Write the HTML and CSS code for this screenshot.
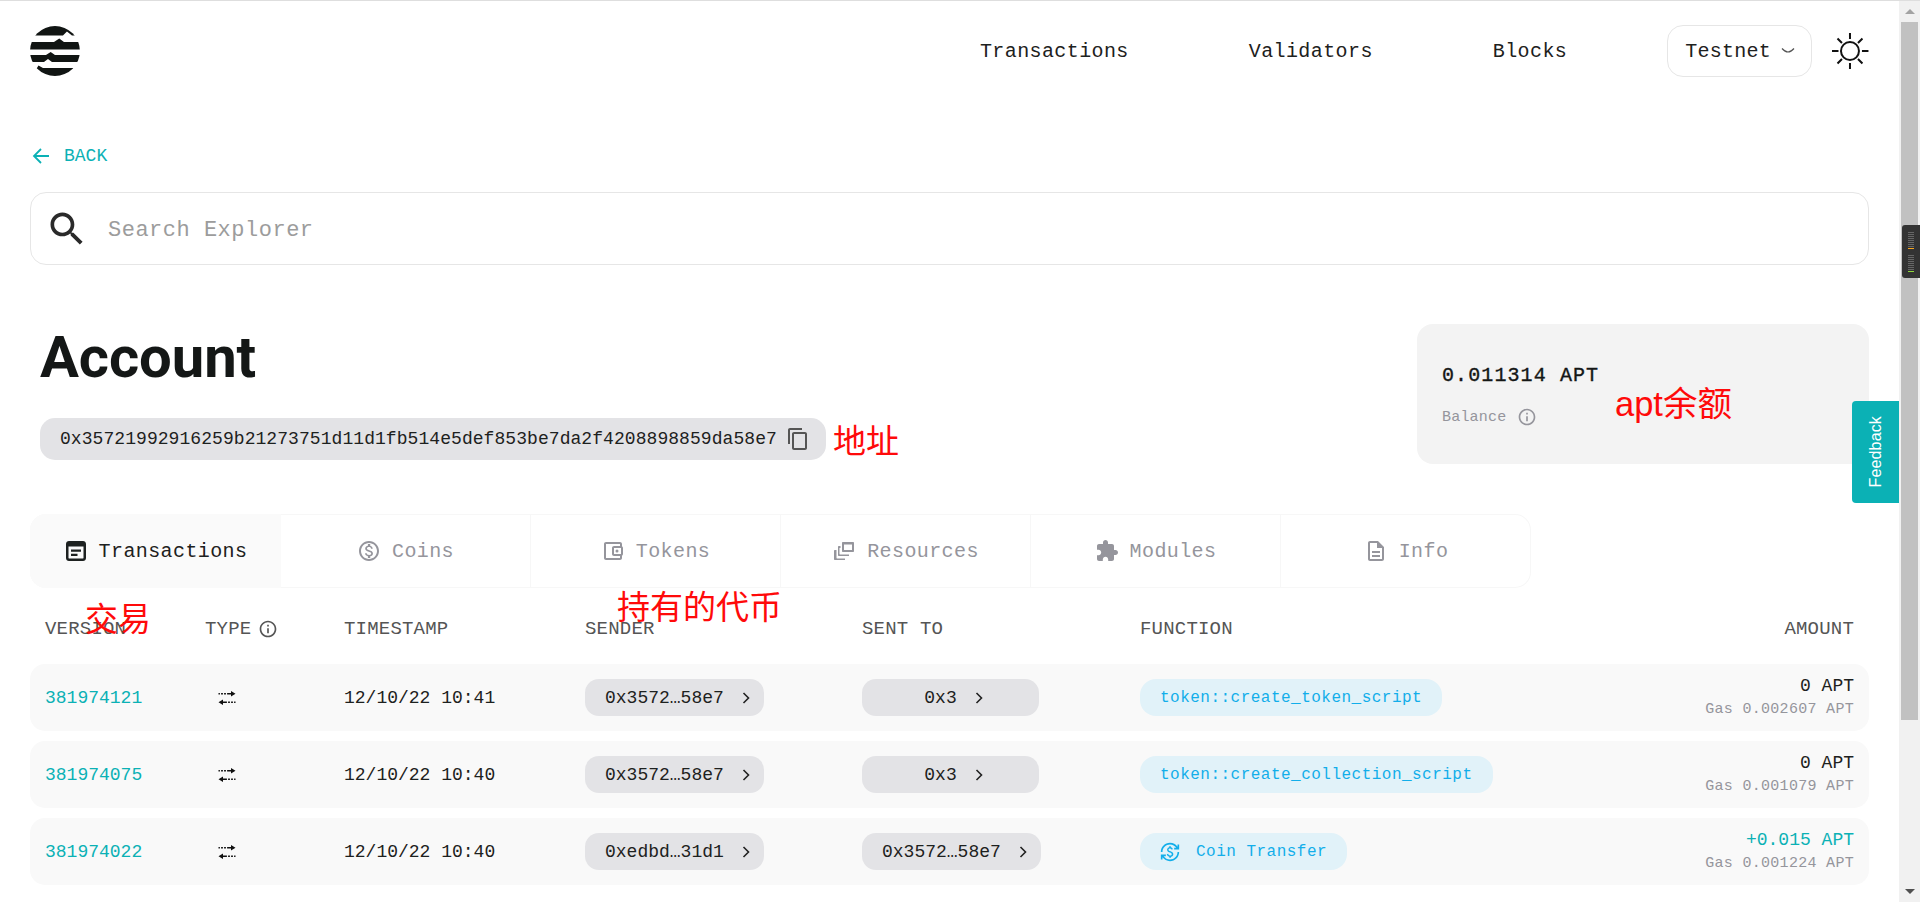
FILE: index.html
```html
<!DOCTYPE html>
<html lang="en">
<head>
<meta charset="utf-8">
<title>Account</title>
<link rel="stylesheet" href="styles.css">
</head>
<body>
<div class="window">
  <main class="page">
    <header class="topbar">
      <svg class="logo" viewBox="0 0 50 50" aria-hidden="true">
        <defs><clipPath id="disc"><circle cx="25" cy="25" r="25"/></clipPath></defs>
        <g clip-path="url(#disc)" fill="#111513">
          <path d="M0 0H50V9.500H42L37 5.500L33 9.500H0Z"/>
          <path d="M0 16H24L29.300 12.500L34 16H50V23.500H0Z"/>
          <path d="M0 29H16L20.700 26L25 29H50V36H22L18 33L14 36H0Z"/>
          <path d="M0 42H7L8.500 39.500L13 42H50V50H0Z"/>
        </g>
      </svg>
      <nav class="nav">
        <a class="nav-link nav-tx">Transactions</a>
        <a class="nav-link nav-val">Validators</a>
        <a class="nav-link nav-blk">Blocks</a>
      </nav>
      <div class="network">
        <span>Testnet</span>
        <svg class="network-caret" viewBox="0 0 14 8"><path d="M1 1.500Q7 8.500 13 1.500"/></svg>
      </div>
      <svg class="sun" viewBox="0 0 38 38" aria-hidden="true">
        <circle cx="19" cy="19" r="9"/>
        <path d="M19 1V7M19 31V37M1 19H7.500M31 19H37.500M6.500 6.500L11 11M27 27L31.500 31.500M6.500 31.500L11 27M27 11L31.500 6.500"/>
      </svg>
    </header>

    <a class="back">
      <svg class="back-arrow" viewBox="0 0 18 18"><path d="M17 9H2M9 2L2 9L9 16"/></svg>
      <span>BACK</span>
    </a>

    <div class="search">
      <svg class="search-icon" viewBox="0 0 24 24"><path d="M15.500 14h-.79l-.28-.27C15.410 12.590 16 11.110 16 9.500 16 5.910 13.090 3 9.500 3S3 5.910 3 9.500 5.910 16 9.500 16c1.610 0 3.090-.59 4.230-1.570l.27.28v.79l5 4.990L20.490 19l-4.990-5zm-6 0C7.010 14 5 11.990 5 9.500S7.010 5 9.500 5 14 7.010 14 9.500 11.990 14 9.500 14z"/></svg>
      <span class="search-text">Search Explorer</span>
    </div>

    <section class="account">
      <div class="account-main">
        <h1 class="title">Account</h1>
        <div class="address">
          <span class="address-text">0x35721992916259b21273751d11d1fb514e5def853be7da2f4208898859da58e7</span>
          <svg class="copy-icon" viewBox="0 0 24 24"><path d="M16 1H4c-1.100 0-2 .9-2 2v14h2V3h12V1zm3 4H8c-1.100 0-2 .9-2 2v14c0 1.100.9 2 2 2h11c1.100 0 2-.9 2-2V7c0-1.100-.9-2-2-2zm0 16H8V7h11v14z"/></svg>
        </div>
      </div>
      <aside class="balance">
        <div class="balance-value">0.011314 APT</div>
        <div class="balance-label">
          <span>Balance</span>
          <svg class="info-icon" viewBox="0 0 24 24"><path d="M11 7h2v2h-2zm0 4h2v6h-2zm1-9C6.480 2 2 6.480 2 12s4.480 10 10 10 10-4.480 10-10S17.520 2 12 2zm0 18c-4.410 0-8-3.590-8-8s3.590-8 8-8 8 3.590 8 8-3.590 8-8 8z"/></svg>
        </div>
      </aside>
    </section>

    <div class="tabs">
      <div class="tab tab-active">
        <svg class="tab-icon" viewBox="0 0 24 24"><path fill-rule="evenodd" d="M5 2H19C20.700 2 22 3.300 22 5V19C22 20.700 20.700 22 19 22H5C3.300 22 2 20.700 2 19V5C2 3.300 3.300 2 5 2ZM4.500 7.500V19C4.500 19.300 4.700 19.500 5 19.500H19C19.300 19.500 19.500 19.300 19.500 19V7.500ZM7 10.500H17V12.800H7ZM7 14.800H13.500V17H7Z"/></svg>
        <span>Transactions</span>
      </div>
      <div class="tab">
        <svg class="tab-icon" viewBox="0 0 24 24"><path d="M12 2C6.480 2 2 6.480 2 12s4.480 10 10 10 10-4.480 10-10S17.520 2 12 2zm0 18c-4.410 0-8-3.590-8-8s3.590-8 8-8 8 3.590 8 8-3.590 8-8 8zm.31-8.860c-1.770-.45-2.340-.94-2.340-1.670 0-.84.79-1.430 2.100-1.430 1.380 0 1.900.66 1.940 1.640h1.710c-.05-1.340-.87-2.570-2.490-2.970V5H10.900v1.690c-1.510.32-2.720 1.300-2.720 2.810 0 1.790 1.490 2.690 3.660 3.210 1.950.46 2.340 1.150 2.340 1.870 0 .53-.39 1.390-2.100 1.390-1.600 0-2.230-.72-2.320-1.640H8.040c.1 1.700 1.360 2.660 2.860 2.970V19h2.340v-1.670c1.520-.29 2.720-1.160 2.730-2.770-.01-2.200-1.900-2.960-3.660-3.420z"/></svg>
        <span>Coins</span>
      </div>
      <div class="tab">
        <svg class="tab-icon" viewBox="0 0 24 24"><path d="M21 7.280V5c0-1.100-.9-2-2-2H5c-1.110 0-2 .9-2 2v14c0 1.100.89 2 2 2h14c1.100 0 2-.9 2-2v-2.280c.59-.35 1-.98 1-1.720V9c0-.74-.41-1.380-1-1.720zM20 9v6h-7V9h7zM5 19V5h14v2h-6c-1.100 0-2 .9-2 2v6c0 1.100.9 2 2 2h6v2H5z"/><circle cx="16" cy="12" r="1.500"/></svg>
        <span>Tokens</span>
      </div>
      <div class="tab">
        <svg class="tab-icon" viewBox="0 0 24 24"><path fill-rule="evenodd" d="M11 3H21C21.600 3 22 3.400 22 4V12C22 12.600 21.600 13 21 13H11C10.400 13 10 12.600 10 12V4C10 3.400 10.400 3 11 3ZM12 5.500V11H20V5.500ZM7 7H8.500V9H7.500V15C7.500 15.300 7.700 15.500 8 15.500H17V17H7C6.400 17 6 16.600 6 16V8C6 7.400 6.400 7 7 7ZM3 11H4.500V19C4.500 19.300 4.700 19.500 5 19.500H13V21H3C2.400 21 2 20.600 2 20V12C2 11.400 2.400 11 3 11Z"/></svg>
        <span>Resources</span>
      </div>
      <div class="tab">
        <svg class="tab-icon" viewBox="0 0 24 24"><path d="M20.500 11H19V7c0-1.100-.9-2-2-2h-4V3.500C13 2.120 11.880 1 10.500 1S8 2.120 8 3.500V5H4c-1.100 0-1.990.9-1.990 2v3.800H3.500c1.490 0 2.700 1.210 2.700 2.700s-1.210 2.700-2.700 2.700H2V20c0 1.100.9 2 2 2h3.800v-1.500c0-1.490 1.210-2.700 2.700-2.700 1.490 0 2.700 1.210 2.700 2.700V22H17c1.100 0 2-.9 2-2v-4h1.500c1.380 0 2.500-1.120 2.500-2.500S21.880 11 20.500 11z"/></svg>
        <span>Modules</span>
      </div>
      <div class="tab">
        <svg class="tab-icon" viewBox="0 0 24 24"><path d="M8 16h8v2H8zm0-4h8v2H8zm6-10H6c-1.100 0-2 .9-2 2v16c0 1.100.89 2 2 2h12c1.100 0 2-.9 2-2V8l-6-6zm4 18H6V4h7v5h5v11z"/></svg>
        <span>Info</span>
      </div>
    </div>

    <div class="table">
      <div class="row-grid table-head">
        <span>VERSION</span>
        <span class="type-head">TYPE
          <svg class="type-info" viewBox="0 0 24 24"><path d="M11 7h2v2h-2zm0 4h2v6h-2zm1-9C6.480 2 2 6.480 2 12s4.480 10 10 10 10-4.480 10-10S17.520 2 12 2zm0 18c-4.410 0-8-3.590-8-8s3.590-8 8-8 8 3.590 8 8-3.590 8-8 8z"/></svg>
        </span>
        <span>TIMESTAMP</span>
        <span>SENDER</span>
        <span>SENT TO</span>
        <span>FUNCTION</span>
        <span class="head-right">AMOUNT</span>
      </div>

      <div class="row-grid row">
        <a class="version">381974121</a>
        <svg class="swap" viewBox="0 0 20 20"><path d="M14 3V5H1.500V6.500H14V8.500L18.500 5.800ZM6 11.500V13.500H18.500V15H6V17L1.500 14.200Z"/><path class="swap-gaps" d="M3.500 4V8M6.500 4V8M9.500 4V8M10.500 12V16M13.500 12V16M16.500 12V16"/></svg>
        <span>12/10/22 10:41</span>
        <a class="pill"><span>0x3572…58e7</span><svg class="chev" viewBox="0 0 10 14"><path d="M2.500 2L7.500 7L2.500 12"/></svg></a>
        <a class="pill"><span>0x3</span><svg class="chev" viewBox="0 0 10 14"><path d="M2.500 2L7.500 7L2.500 12"/></svg></a>
        <span class="fn">token::create_token_script</span>
        <div class="amount"><span>0 APT</span><span class="gas">Gas 0.002607 APT</span></div>
      </div>

      <div class="row-grid row">
        <a class="version">381974075</a>
        <svg class="swap" viewBox="0 0 20 20"><path d="M14 3V5H1.500V6.500H14V8.500L18.500 5.800ZM6 11.500V13.500H18.500V15H6V17L1.500 14.200Z"/><path class="swap-gaps" d="M3.500 4V8M6.500 4V8M9.500 4V8M10.500 12V16M13.500 12V16M16.500 12V16"/></svg>
        <span>12/10/22 10:40</span>
        <a class="pill"><span>0x3572…58e7</span><svg class="chev" viewBox="0 0 10 14"><path d="M2.500 2L7.500 7L2.500 12"/></svg></a>
        <a class="pill"><span>0x3</span><svg class="chev" viewBox="0 0 10 14"><path d="M2.500 2L7.500 7L2.500 12"/></svg></a>
        <span class="fn">token::create_collection_script</span>
        <div class="amount"><span>0 APT</span><span class="gas">Gas 0.001079 APT</span></div>
      </div>

      <div class="row-grid row">
        <a class="version">381974022</a>
        <svg class="swap" viewBox="0 0 20 20"><path d="M14 3V5H1.500V6.500H14V8.500L18.500 5.800ZM6 11.500V13.500H18.500V15H6V17L1.500 14.200Z"/><path class="swap-gaps" d="M3.500 4V8M6.500 4V8M9.500 4V8M10.500 12V16M13.500 12V16M16.500 12V16"/></svg>
        <span>12/10/22 10:40</span>
        <a class="pill"><span>0xedbd…31d1</span><svg class="chev" viewBox="0 0 10 14"><path d="M2.500 2L7.500 7L2.500 12"/></svg></a>
        <a class="pill"><span>0x3572…58e7</span><svg class="chev" viewBox="0 0 10 14"><path d="M2.500 2L7.500 7L2.500 12"/></svg></a>
        <span class="fn fn-icon">
          <svg class="fn-svg" viewBox="0 0 24 24"><path d="M12.890 11.100c-1.780-.59-2.640-.96-2.640-1.900 0-1.020 1.110-1.390 1.810-1.390 1.310 0 1.790.99 1.900 1.340l1.580-.67c-.15-.45-.82-1.920-2.540-2.240V5h-2v1.260c-2.480.56-2.490 2.860-2.490 2.960 0 2.270 2.250 2.910 3.350 3.310 1.580.56 2.280 1.070 2.280 2.030 0 1.130-1.050 1.610-1.980 1.610-1.820 0-2.340-1.870-2.400-2.090l-1.660.67c.63 2.190 2.280 2.780 3.020 2.960V19h2v-1.240c.52-.09 2.900-.57 2.900-3.020 0-1.320-.59-2.500-3-3.300zM3 21H1v-6h6v2H4.520c1.610 2.410 4.360 4 7.480 4 4.970 0 9-4.030 9-9h2c0 6.080-4.920 11-11 11-3.720 0-7.010-1.850-9-4.670V21zm-2-9C1 5.920 5.920 1 12 1c3.720 0 7.010 1.850 9 4.670V3h2v6h-6V7h2.480C17.870 4.590 15.120 3 12 3c-4.970 0-9 4.030-9 9H1z"/></svg>
          Coin Transfer
        </span>
        <div class="amount amount-in"><span>+0.015 APT</span><span class="gas">Gas 0.001224 APT</span></div>
      </div>
    </div>
  </main>

  <div class="scrollbar">
    <div class="sb-btn"><span class="sb-up"></span></div>
    <div class="sb-thumb"></div>
    <div class="sb-track"></div>
    <div class="sb-btn"><span class="sb-down"></span></div>
  </div>

  <div class="sb-widget">
    <div class="sb-ticks"><i></i><i></i><i></i><i></i><i></i><i></i><i></i><i></i><i class="tick-orange"></i></div>
    <div class="sb-ticks"><i></i><i></i><i></i><i></i><i></i><i></i><i></i><i></i><i class="tick-green"></i></div>
  </div>

  <a class="feedback"><span>Feedback</span></a>

  <span class="note note-addr">地址</span>
  <span class="note note-bal">apt余额</span>
  <span class="note note-tx">交易</span>
  <span class="note note-coin">持有的代币</span>
</div>
</body>
</html>
```

FILE: styles.css
```css
* { box-sizing: border-box; }

html, body { margin: 0; padding: 0; }

body {
  background: #fff;
  color: #1d2120;
  font-family: "Liberation Mono", "DejaVu Sans Mono", monospace;
  font-size: 18px;
}

.window {
  position: relative;
  display: flex;
  width: 1920px;
  height: 902px;
  overflow: hidden;
  border-top: 1px solid #dedede;
}

.page {
  flex: 1;
  min-width: 0;
  padding: 0 30px;
}

.topbar {
  display: flex;
  align-items: center;
  height: 100px;
}

.logo { width: 50px; height: 50px; }

.nav {
  display: flex;
  margin-left: 900px;
}

.nav-link {
  font-size: 20px;
  letter-spacing: .4px;
  color: #1d2120;
}

.nav-val { margin-left: 120px; }
.nav-blk { margin-left: 120px; }

.network {
  display: flex;
  align-items: center;
  gap: 10px;
  width: 145px;
  height: 52px;
  margin-left: 100px;
  padding-left: 17px;
  border: 1.5px solid #e6e6e6;
  border-radius: 16px;
  font-size: 20px;
  letter-spacing: .25px;
}

.network-caret {
  width: 14px;
  height: 8px;
  fill: none;
  stroke: #555;
  stroke-width: 1.2;
}

.sun {
  width: 38px;
  height: 38px;
  margin-left: 19px;
  fill: none;
  stroke: #111;
  stroke-width: 2;
}

.back {
  display: flex;
  align-items: center;
  gap: 14px;
  height: 22px;
  margin-top: 44px;
  color: #0bb1b5;
  font-size: 18px;
  padding-left: 2px;
}

.back-arrow {
  width: 18px;
  height: 18px;
  fill: none;
  stroke: #0bb1b5;
  stroke-width: 1.800;
}

.search {
  display: flex;
  align-items: center;
  height: 73px;
  margin-top: 25px;
  padding-left: 14px;
  border: 1.5px solid #e6e6e6;
  border-radius: 16px;
}

.search-icon { width: 44px; height: 44px; fill: #2a2a2a; }

.search-text {
  margin-left: 19px;
  padding-top: 3px;
  color: #9c9c9c;
  font-size: 22px;
  letter-spacing: .5px;
}

.account {
  display: flex;
  justify-content: space-between;
  height: 140px;
  margin-top: 59px;
}

.account-main { padding-left: 10px; }

.title {
  margin: 0;
  padding-top: 5px;
  font-family: Roboto, "Noto Sans", sans-serif;
  font-size: 58px;
  font-weight: 700;
  line-height: 56px;
  letter-spacing: -.1px;
  color: #141716;
}

.address {
  display: flex;
  align-items: center;
  gap: 9px;
  width: 786px;
  height: 42px;
  margin-top: 33px;
  padding-left: 20px;
  background: #e3e3e6;
  border-radius: 15px;
}

.address-text { letter-spacing: .06px; }

.copy-icon { width: 24px; height: 24px; fill: #555; }

.balance {
  width: 452px;
  padding: 39px 25px 0;
  background: #f3f3f3;
  border-radius: 16px;
}

.balance-value {
  font-size: 20px;
  letter-spacing: 1.1px;
  line-height: 26px;
  color: #141716;
  -webkit-text-stroke: .35px #141716;
}

.balance-label {
  display: flex;
  align-items: center;
  gap: 11px;
  margin-top: 18px;
  color: #95959c;
  font-size: 15px;
  letter-spacing: .2px;
}

.info-icon { width: 20px; height: 20px; fill: #95959c; }

.tabs {
  display: grid;
  grid-template-columns: 251px repeat(5, 250px);
  width: 1501px;
  height: 74px;
  margin-top: 50px;
  border-radius: 16px;
  box-shadow: inset 0 0 0 1px #f7f7f7;
}

.tab {
  display: flex;
  align-items: center;
  justify-content: center;
  gap: 11px;
  border-right: 1px solid #f7f7f7;
  color: #95959c;
  font-size: 20px;
  letter-spacing: .4px;
}

.tab:last-child { border-right: 0; }

.tab-active {
  background: #fafafa;
  color: #1d2120;
  border-right: 0;
  border-radius: 16px 0 0 16px;
}

.tab-icon { width: 24px; height: 24px; fill: currentColor; }

.row-grid {
  display: grid;
  grid-template-columns: 160px 139px 241px 277px 278px 1fr auto;
  align-items: center;
  padding: 0 15px;
}

.table-head {
  height: 76px;
  padding-top: 6px;
  color: #555;
  font-size: 19px;
  letter-spacing: .2px;
}

.type-head { display: flex; align-items: center; gap: 7px; }
.type-info { width: 20px; height: 20px; fill: #555; }

.head-right { text-align: right; }

.row {
  height: 67px;
  margin-bottom: 10px;
  background: #f9f9f9;
  border-radius: 15px;
}

.version { color: #0bb1b5; }

.swap {
  width: 20px;
  height: 20px;
  margin-left: 12px;
  fill: #111;
}

.swap-gaps { fill: none; stroke: #f9f9f9; stroke-width: 1.2; }

.pill {
  display: inline-flex;
  align-items: center;
  justify-content: center;
  justify-self: start;
  gap: 17px;
  min-width: 177px;
  height: 37px;
  padding: 0 13px 0 20px;
  background: #e3e3e6;
  border-radius: 14px;
}

.chev {
  width: 10px;
  height: 14px;
  fill: none;
  stroke: #222;
  stroke-width: 1.600;
}

.fn {
  display: inline-flex;
  align-items: center;
  justify-self: start;
  height: 37px;
  padding: 0 20px;
  background: #e1f2f9;
  border-radius: 16px;
  color: #12aeea;
  font-size: 16px;
  letter-spacing: .48px;
  white-space: nowrap;
}

.fn-svg { width: 20px; height: 20px; margin-right: 16px; fill: #12aeea; }

.amount {
  display: flex;
  flex-direction: column;
  align-items: flex-end;
  line-height: 24px;
}

.amount-in span:first-child { color: #0bb1b5; }

.gas {
  color: #95959c;
  font-size: 15px;
  letter-spacing: .3px;
}

.scrollbar {
  display: flex;
  flex-direction: column;
  width: 21px;
  background: #f1f1f1;
}

.sb-btn {
  display: flex;
  align-items: center;
  justify-content: center;
  height: 21px;
  background: #f1f1f1;
}

.sb-up {
  width: 0;
  height: 0;
  border-left: 5px solid transparent;
  border-right: 5px solid transparent;
  border-bottom: 5px solid #a3a3a3;
}

.sb-down {
  width: 0;
  height: 0;
  border-left: 5px solid transparent;
  border-right: 5px solid transparent;
  border-top: 5px solid #505050;
}

.sb-thumb {
  height: 698px;
  margin: 0 2px;
  background: #c1c1c1;
}

.sb-track { flex: 1; }

.sb-widget {
  position: absolute;
  top: 224px;
  right: 0;
  display: flex;
  flex-direction: column;
  gap: 5px;
  width: 18px;
  height: 53px;
  padding: 7px 0 0 6px;
  background: #333;
  border-radius: 3px 0 0 3px;
}

.sb-ticks { display: flex; flex-direction: column; }

.sb-ticks i {
  display: block;
  width: 6px;
  height: 1px;
  margin-bottom: 1px;
  background: #666;
}

.sb-ticks .tick-orange { background: #f5a623; }
.sb-ticks .tick-green { background: #8fd63a; }

.feedback {
  position: absolute;
  top: 400px;
  right: 21px;
  display: flex;
  align-items: center;
  justify-content: center;
  width: 47px;
  height: 102px;
  background: #0bb1b5;
  border-radius: 4px 0 0 4px;
  color: #fff;
  font-family: "Liberation Sans", Arial, sans-serif;
  font-size: 16px;
  letter-spacing: .15px;
}

.feedback span { writing-mode: vertical-rl; transform: rotate(180deg); }

.note {
  position: absolute;
  color: #ff0a0a;
  font-family: "Liberation Sans", "Noto Sans CJK SC", sans-serif;
  font-size: 33px;
  line-height: 40px;
  white-space: nowrap;
}

.note-addr { left: 833px; top: 421px; }
.note-bal { left: 1615px; top: 383px; font-size: 34.5px; }
.note-tx { left: 85px; top: 599px; }
.note-coin { left: 617px; top: 587px; }
```
